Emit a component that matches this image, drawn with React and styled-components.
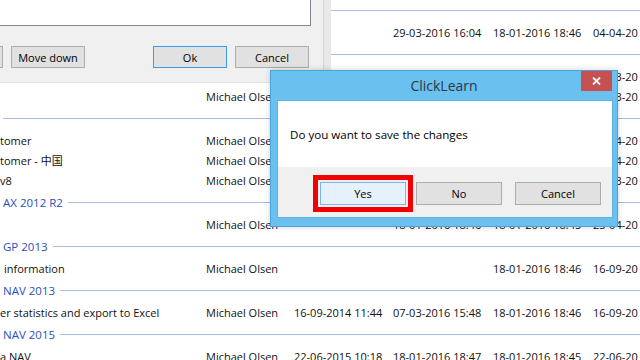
import styled, { createGlobalStyle } from "styled-components";

const GlobalStyle = createGlobalStyle`
  html, body {
    margin: 0;
    padding: 0;
    background: #fff;
    overflow: hidden;
  }
  body {
    font-family: "Open Sans", "Noto Sans", "Noto Sans CJK SC", sans-serif;
    font-size: 11px;
    color: #000;
  }
`;

const Desktop = styled.div`
  position: relative;
  width: 640px;
  height: 360px;
  overflow: hidden;
  background: #fff;
`;

const List = styled.div`
  margin-top: -2px;
  display: flex;
  flex-direction: column;
`;

const GroupHeader = styled.div`
  height: 24px;
  display: flex;
  align-items: center;
  gap: 5px;
  padding-left: 3px;
  color: #2a4fbd;
  font-size: 11.5px;
  white-space: nowrap;

  &::after {
    content: "";
    flex: 1;
    height: 1px;
    background: #aabde6;
  }
`;

const Row = styled.div`
  height: 20px;
  display: grid;
  grid-template-columns: 206px 88px 99px 100px 100px 1fr;
  align-items: center;
  white-space: nowrap;
  color: #111;
`;

const Cell = styled.span`
  overflow: hidden;
  padding-left: ${(p) => p.$indent || 0}px;
  font-size: 11px;
`;

const BackDialog = styled.div`
  position: absolute;
  left: 0;
  top: 0;
  width: 331px;
  height: 82px;
  display: flex;
  border-bottom: 1px solid #e3e3e3;
`;

const DialogBody = styled.div`
  flex: 1;
  background: #f0f0f0;
  display: flex;
  flex-direction: column;
`;

const DialogEdge = styled.div`
  width: 7px;
  background: #e8e8e8;
  border-left: 1px solid #d4d4d4;
`;

const ListBox = styled.div`
  width: 310px;
  height: 25px;
  background: #fff;
  border-right: 1px solid #828790;
  border-bottom: 1px solid #828790;
`;

const ButtonRow = styled.div`
  display: flex;
  align-items: center;
  margin-top: 20px;
  padding-right: 14px;
`;

const Button = styled.button`
  box-sizing: border-box;
  width: ${(p) => p.$w || 74}px;
  height: ${(p) => p.$h || 22}px;
  margin: 0 0 0 ${(p) => p.$gap || 0}px;
  padding: 0;
  font-family: "Open Sans", "Noto Sans", sans-serif;
  font-size: ${(p) => p.$fs || 11}px;
  color: #000;
  background: ${(p) => (p.$active ? "#e5f1fb" : "#e1e1e1")};
  border: 1px solid ${(p) => (p.$focus ? "#3c9be8" : p.$active ? "#7eb4ea" : "#adadad")};
  position: relative;
`;

const PartialButton = styled.div`
  width: 3px;
  height: 22px;
  box-sizing: border-box;
  background: #e1e1e1;
  border: 1px solid #adadad;
  border-left: none;
`;

const Spacer = styled.div`
  flex: 1;
`;

const Modal = styled.div`
  position: absolute;
  left: 270px;
  top: 70px;
  width: 348px;
  height: 157px;
  box-sizing: border-box;
  background: #6ac0ef;
  border: 1px solid #4aa3da;
  display: flex;
  flex-direction: column;
  box-shadow: 0 0 6px rgba(0, 0, 0, 0.18);
`;

const TitleBar = styled.div`
  height: 30px;
  display: flex;
  align-items: flex-start;
  padding-left: 36px;
`;

const Title = styled.div`
  flex: 1;
  height: 30px;
  line-height: 30px;
  text-align: center;
  font-size: 14px;
  color: #2c3744;
`;

const CloseButton = styled.div`
  width: 31px;
  height: 20px;
  margin-right: 5px;
  background: #c75050;
  display: flex;
  align-items: center;
  justify-content: center;
`;

const Client = styled.div`
  margin: 0 5px 0 7px;
  background: #fff;
  display: flex;
  flex-direction: column;
  height: 116px;
  box-shadow: 0 0 0 1px #5eb2e4;
`;

const Message = styled.div`
  height: 66px;
  display: flex;
  align-items: center;
  padding-left: 12px;
  font-size: 11.6px;
`;

const Footer = styled.div`
  flex: 1;
  background: #f0f0f0;
  display: flex;
  justify-content: flex-end;
  align-items: flex-start;
  padding: 15px 11px 0 0;
`;

const Highlight = styled.span`
  position: absolute;
  left: -8px;
  top: -8px;
  right: -8px;
  bottom: -8px;
  border: 5px solid #f00000;
  pointer-events: none;
`;

const rows = [
  { type: "h", text: "" },
  { type: "r", cells: ["", "", "", "29-03-2016 16:04", "18-01-2016 18:46", "04-04-20"] },
  { type: "h", text: "" },
  { type: "r", cells: ["", "", "", "", "", "29-03-20"] },
  { type: "r", cells: ["", "Michael Olsen", "", "", "", "29-03-20"] },
  { type: "h", text: "" },
  { type: "r", cells: ["tomer", "Michael Olsen", "", "", "", "04-04-20"] },
  { type: "r", cells: ["tomer - 中国", "Michael Olsen", "", "", "", "04-04-20"] },
  { type: "r", cells: ["v8", "Michael Olsen", "", "", "", "29-03-20"], indent: -2 },
  { type: "h", text: "AX 2012 R2" },
  { type: "r", cells: ["", "Michael Olsen", "", "18-01-2016 18:46", "18-01-2016 18:45", "25-04-20"] },
  { type: "h", text: "GP 2013" },
  { type: "r", cells: ["information", "Michael Olsen", "", "", "18-01-2016 18:46", "16-09-20"], indent: 4 },
  { type: "h", text: "NAV 2013" },
  {
    type: "r",
    cells: ["er statistics and export to Excel", "Michael Olsen", "16-09-2014 11:44", "07-03-2016 15:48", "18-01-2016 18:46", "16-09-20"],
  },
  { type: "h", text: "NAV 2015" },
  { type: "r", cells: ["a NAV", "Michael Olsen", "22-06-2015 10:18", "18-01-2016 18:47", "18-01-2016 18:45", "22-06-20"] },
];

export default function App() {
  return (
    <Desktop>
      <GlobalStyle />
      <List>
        {rows.map((r, i) =>
          r.type === "h" ? (
            <GroupHeader key={i}>{r.text}</GroupHeader>
          ) : (
            <Row key={i}>
              {r.cells.map((c, j) => (
                <Cell key={j} $indent={j === 0 ? r.indent : 0}>
                  {c}
                </Cell>
              ))}
            </Row>
          )
        )}
      </List>

      <BackDialog>
        <DialogBody>
          <ListBox />
          <ButtonRow>
            <PartialButton />
            <Button $gap={8}>Move down</Button>
            <Spacer />
            <Button $focus>Ok</Button>
            <Button $gap={8}>Cancel</Button>
          </ButtonRow>
        </DialogBody>
        <DialogEdge />
      </BackDialog>

      <Modal>
        <TitleBar>
          <Title>ClickLearn</Title>
          <CloseButton>
            <svg width="9" height="8" viewBox="0 0 9 8">
              <path d="M1 0.5 L8 7.5 M8 0.5 L1 7.5" stroke="#fff" strokeWidth="1.8" />
            </svg>
          </CloseButton>
        </TitleBar>
        <Client>
          <Message>Do you want to save the changes</Message>
          <Footer>
            <Button $w={86} $h={23} $active>
              Yes
              <Highlight />
            </Button>
            <Button $w={86} $h={23} $gap={10}>
              No
            </Button>
            <Button $w={86} $h={23} $gap={13}>
              Cancel
            </Button>
          </Footer>
        </Client>
      </Modal>
    </Desktop>
  );
}
